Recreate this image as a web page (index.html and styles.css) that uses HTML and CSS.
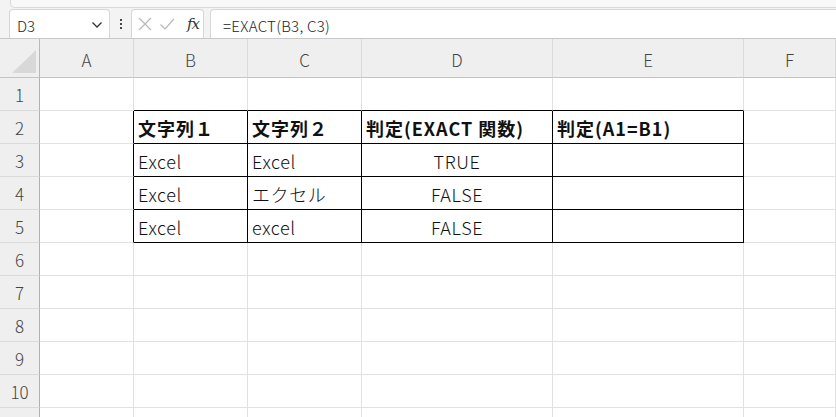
FILE: index.html
```html
<!DOCTYPE html>
<html lang="ja">
<head>
<meta charset="utf-8">
<title>EXACT</title>
<link rel="stylesheet" href="styles.css">
</head>
<body>
<div class="app">
  <div class="ribbon-edge"><div class="ribbon-panel"></div></div>
  <div class="toolbar">
    <div class="namebox">
      <span class="namebox-text">D3</span>
      <svg class="chev" width="12" height="8" viewBox="0 0 12 8"><path d="M1.5 1.5 L6 6 L10.5 1.5" fill="none" stroke="#333" stroke-width="1.3"/></svg>
    </div>
    <div class="dots"><span></span><span></span><span></span></div>
    <div class="fxbox">
      <svg class="ico" width="16" height="16" viewBox="0 0 16 16"><path d="M2 2 L14 14 M14 2 L2 14" stroke="#b8b8b8" stroke-width="1.2" fill="none"/></svg>
      <svg class="ico" width="16" height="16" viewBox="0 0 16 16"><path d="M1.5 8.5 L6 13 L15 3" stroke="#b8b8b8" stroke-width="1.2" fill="none"/></svg>
      <span class="fx">fx</span>
    </div>
    <div class="formula">=EXACT(B3, C3)</div>
  </div>
  <div class="sheet">
    <div class="corner"><div class="tri"></div></div>
    <div class="ch">A</div><div class="ch">B</div><div class="ch">C</div><div class="ch">D</div><div class="ch">E</div><div class="ch">F</div>

    <div class="rh">1</div>
    <div class="c"></div><div class="c bb"></div><div class="c bb"></div><div class="c bb"></div><div class="c bb"></div><div class="c"></div>

    <div class="rh">2</div>
    <div class="c br"></div>
    <div class="c t b">文字列１</div>
    <div class="c t b">文字列２</div>
    <div class="c t b">判定(EXACT 関数)</div>
    <div class="c t b">判定(A1=B1)</div>
    <div class="c"></div>

    <div class="rh">3</div>
    <div class="c br"></div>
    <div class="c t">Excel</div>
    <div class="c t">Excel</div>
    <div class="c t ctr">TRUE</div>
    <div class="c t"></div>
    <div class="c"></div>

    <div class="rh">4</div>
    <div class="c br"></div>
    <div class="c t">Excel</div>
    <div class="c t">エクセル</div>
    <div class="c t ctr">FALSE</div>
    <div class="c t"></div>
    <div class="c"></div>

    <div class="rh">5</div>
    <div class="c br"></div>
    <div class="c t">Excel</div>
    <div class="c t">excel</div>
    <div class="c t ctr">FALSE</div>
    <div class="c t"></div>
    <div class="c"></div>

    <div class="rh">6</div><div class="c"></div><div class="c"></div><div class="c"></div><div class="c"></div><div class="c"></div><div class="c"></div>
    <div class="rh">7</div><div class="c"></div><div class="c"></div><div class="c"></div><div class="c"></div><div class="c"></div><div class="c"></div>
    <div class="rh">8</div><div class="c"></div><div class="c"></div><div class="c"></div><div class="c"></div><div class="c"></div><div class="c"></div>
    <div class="rh">9</div><div class="c"></div><div class="c"></div><div class="c"></div><div class="c"></div><div class="c"></div><div class="c"></div>
    <div class="rh">10</div><div class="c"></div><div class="c"></div><div class="c"></div><div class="c"></div><div class="c"></div><div class="c"></div>
    <div class="rh last"></div><div class="c"></div><div class="c"></div><div class="c"></div><div class="c"></div><div class="c"></div><div class="c"></div>
  </div>
</div>
</body>
</html>
```
FILE: styles.css
```css
* { box-sizing: border-box; }
html, body { margin: 0; padding: 0; }
body {
  width: 836px;
  height: 417px;
  overflow: hidden;
  background: #f3f3f3;
  font-family: "Noto Sans CJK JP", "Noto Sans", sans-serif;
  color: #222;
}
.app { display: flex; flex-direction: column; }
.ribbon-edge { height: 8px; padding-left: 10px; background: #f3f3f3; }
.ribbon-panel {
  height: 8px;
  background: #f8f8f8;
  border: 1px solid #d8d8d8;
  border-top: none;
  border-right: none;
  border-bottom-left-radius: 5px;
}
.toolbar {
  height: 31px;
  display: flex;
  align-items: stretch;
  padding: 1px 0 0 9px;
  border-bottom: 1px solid #c8c8c8;
  background: #f3f3f3;
}
.namebox {
  width: 101px;
  background: #fff;
  border: 1px solid #d6d6d6;
  border-bottom: none;
  border-radius: 4px 4px 0 0;
  display: flex;
  align-items: center;
  justify-content: space-between;
  padding: 0 6px 0 7px;
}
.namebox-text { font-size: 15px; color: #222; padding-top: 2px; font-weight: 300; }
.chev { margin-top: 1px; }
.dots {
  width: 21px;
  display: flex;
  flex-direction: column;
  align-items: center;
  justify-content: center;
  gap: 2px;
}
.dots span { width: 2px; height: 2px; background: #444; display: block; }
.fxbox {
  width: 73px;
  background: #fff;
  border: 1px solid #d6d6d6;
  border-bottom: none;
  border-radius: 4px 4px 0 0;
  display: flex;
  align-items: center;
  padding: 0 0 0 5px;
  gap: 6px;
}
.fx {
  font-family: "DejaVu Serif", "Liberation Serif", serif;
  font-style: italic;
  font-size: 15px;
  color: #333;
  margin-left: 6px;
  letter-spacing: -1px;
}
.formula {
  flex: 1;
  margin-left: 6px;
  background: #fff;
  border: 1px solid #d6d6d6;
  border-right: none;
  border-bottom: none;
  border-radius: 4px 0 0 0;
  font-size: 15px;
  font-weight: 300;
  letter-spacing: 0.3px;
  color: #222;
  display: flex;
  align-items: center;
  padding: 2px 0 0 12px;
}
.sheet {
  display: grid;
  grid-template-columns: 40px 94px 114px 114px 191px 191px 1fr;
  grid-template-rows: 39px repeat(10, 33px) 10px;
  background: #fff;
}
.corner {
  background: #efefef;
  border-right: 1px solid #b8b8b8;
  border-bottom: 1px solid #c4c4c4;
  position: relative;
}
.tri {
  position: absolute;
  right: 3px;
  bottom: 4px;
  width: 0; height: 0;
  border-left: 24px solid transparent;
  border-bottom: 23px solid #d8d8d8;
}
.ch {
  background: #efefef;
  border-right: 1px solid #dadada;
  border-bottom: 1px solid #c4c4c4;
  display: flex;
  align-items: center;
  justify-content: center;
  font-size: 17px;
  font-weight: 300;
  color: #444;
  padding-top: 3px;
}
.rh {
  background: #efefef;
  border-right: 1px solid #b0b0b0;
  border-bottom: 1px solid #dadada;
  display: flex;
  align-items: center;
  justify-content: center;
  font-size: 17px;
  font-weight: 300;
  color: #444;
  padding-top: 1px;
}
.rh.last { border-bottom: none; }
.c {
  border-right: 1px solid #e1e1e1;
  border-bottom: 1px solid #e1e1e1;
  font-size: 18px;
  font-weight: 300;
  letter-spacing: 0.6px;
  color: #111;
  display: flex;
  align-items: center;
  padding: 1px 0 0 4px;
  white-space: nowrap;
}
.c.t { border-right-color: #000; border-bottom-color: #000; }
.c.br { border-right-color: #000; }
.c.bb { border-bottom-color: #000; }
.c.b { font-weight: 700; letter-spacing: 1px; }
.c.ctr { justify-content: center; padding-left: 0; }
```
